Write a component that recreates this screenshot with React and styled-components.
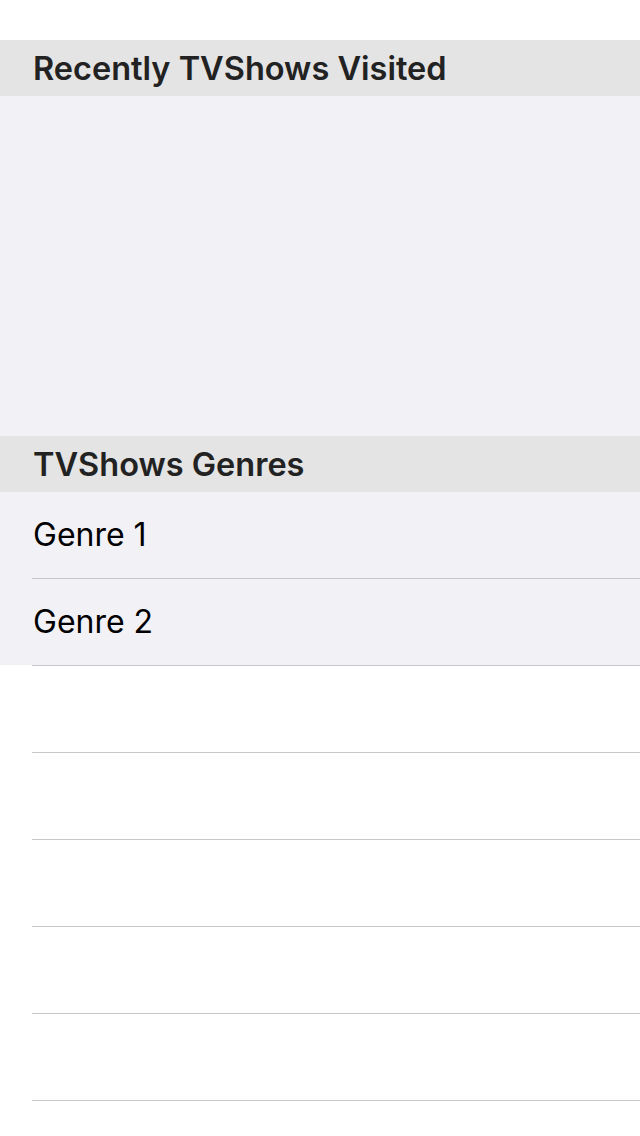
import styled, { createGlobalStyle } from 'styled-components';

const GlobalStyle = createGlobalStyle`
  html, body {
    margin: 0;
    padding: 0;
    background: #fff;
  }
  body {
    font-family: Inter, "Noto Sans", "Liberation Sans", sans-serif;
  }
`;

const genres = ['Genre 1', 'Genre 2'];
const emptyRows = 6;

const App = () => {
  const rows = [...genres, ...Array.from({ length: emptyRows }, () => null)];

  return (
    <>
      <GlobalStyle />
      <Screen>
        <StatusBar />
        <SectionHeader>Recently TVShows Visited</SectionHeader>
        <RecentArea />
        <SectionHeader>TVShows Genres</SectionHeader>
        <List>
          {rows.map((genre, i) => (
            <Row key={i} $filled={!!genre} $divided={i > 0}>
              {genre && <RowLabel>{genre}</RowLabel>}
            </Row>
          ))}
        </List>
      </Screen>
    </>
  );
};

const Screen = styled.div`
  display: flex;
  flex-direction: column;
  width: 640px;
  height: 1136px;
  background: #fff;
  overflow: hidden;
`;

const StatusBar = styled.div`
  height: 40px;
  flex-shrink: 0;
  background: #fff;
`;

const SectionHeader = styled.div`
  display: flex;
  align-items: center;
  flex-shrink: 0;
  height: 56px;
  padding-left: 33px;
  background: #e4e4e4;
  color: #222;
  font-size: 32.5px;
  font-weight: 600;
`;

const RecentArea = styled.div`
  height: 340px;
  flex-shrink: 0;
  background: #f2f1f6;
`;

const List = styled.div`
  display: flex;
  flex-direction: column;
`;

const Row = styled.div`
  position: relative;
  display: flex;
  align-items: center;
  flex-shrink: 0;
  box-sizing: border-box;
  height: ${(props) => (props.$divided ? '87px' : '86px')};
  padding-top: ${(props) => (props.$divided ? '1px' : '0')};
  padding-left: 33px;
  background: ${(props) => (props.$filled ? '#f2f1f6' : '#fff')};

  &::before {
    content: '';
    display: ${(props) => (props.$divided ? 'block' : 'none')};
    position: absolute;
    top: 0;
    left: 32px;
    right: 0;
    height: 1px;
    background: #c8c7cc;
  }
`;

const RowLabel = styled.span`
  color: #000;
  font-size: 32px;
  font-weight: 400;
  margin-top: -2px;
`;

export default App;
